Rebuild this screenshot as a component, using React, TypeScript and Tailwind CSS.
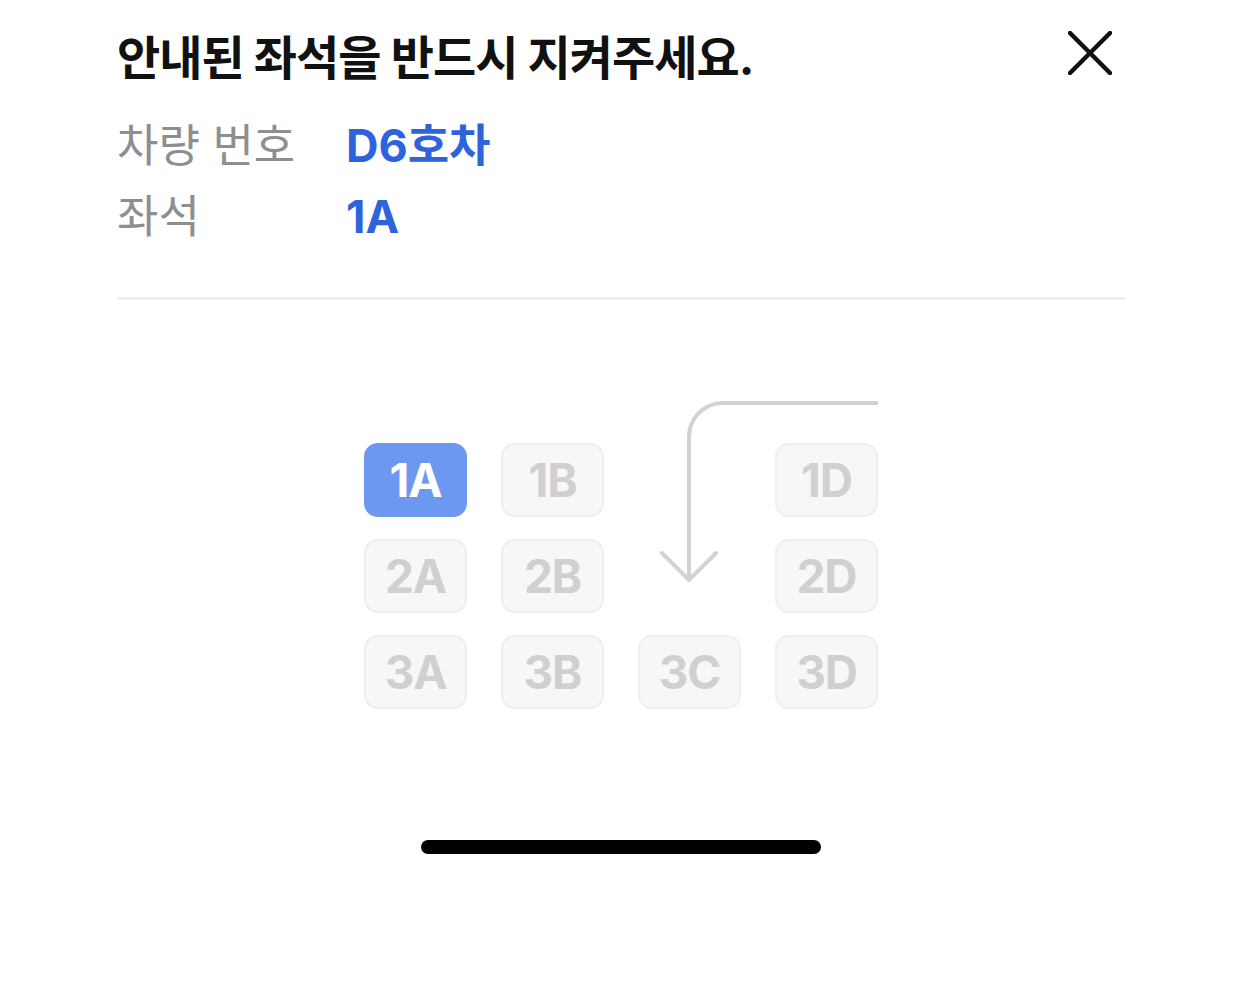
import React from 'react';

const rows = [
    ['1A', '1B', null, '1D'],
    ['2A', '2B', null, '2D'],
    ['3A', '3B', '3C', '3D'],
];

const selected = '1A';

const Seat = ({ label }: { label: string }) => {
    const isSelected = label === selected;
    return (
        <div
            className={
                isSelected
                    ? 'h-[74px] rounded-[14px] bg-[#6d98ef] flex items-center justify-center text-white'
                    : 'h-[74px] rounded-[14px] bg-[#f7f7f7] border-2 border-[#efefef] flex items-center justify-center text-[#d0d0d0]'
            }
        >
            <span className="text-[46px] font-bold tracking-tight">{label}</span>
        </div>
    );
};

export default function App() {
    return (
        <div
            className="w-[1242px] h-[985px] bg-white flex flex-col"
            style={{ fontFamily: 'Inter, "Noto Sans CJK KR", sans-serif' }}
        >
            <div className="px-[117px] pt-[28px]">
                <div className="flex items-center justify-between">
                    <h1 className="text-[47px] font-bold text-[#111] tracking-[-1px] leading-[60px]">
                        안내된 좌석을 반드시 지켜주세요.
                    </h1>
                    <button className="w-[44px] h-[44px] flex items-center justify-center mr-[13px] mt-[-10px]">
                        <svg width="44" height="44" viewBox="0 0 44 44" fill="none" stroke="#111" strokeWidth="4.5" strokeLinecap="round">
                            <path d="M2 2 L42 42 M42 2 L2 42" />
                        </svg>
                    </button>
                </div>

                <div className="mt-[22px] flex flex-col text-[45px] leading-[71px]">
                    <div className="flex">
                        <span className="w-[229px] text-[#8e8e8e]">차량 번호</span>
                        <span className="font-bold text-[#2f63dc]">D6호차</span>
                    </div>
                    <div className="flex">
                        <span className="w-[229px] text-[#8e8e8e]">좌석</span>
                        <span className="font-bold text-[#2f63dc]">1A</span>
                    </div>
                </div>

                <div className="mt-[45px] h-[3px] bg-[#efefef]" />
            </div>

            <div className="flex justify-center mt-[143px]">
                <div className="relative w-[514px] grid grid-cols-4 gap-x-[34px] gap-y-[22px]">
                    <svg
                        className="absolute left-0 top-[-44px]"
                        width="514"
                        height="190"
                        viewBox="0 0 514 190"
                        fill="none"
                        stroke="#d2d2d2"
                        strokeWidth="4"
                        strokeLinecap="round"
                        strokeLinejoin="round"
                    >
                        <path d="M514 4 H359 A34 34 0 0 0 325 38 V181" />
                        <path d="M298 154 L325 181 L352 154" />
                    </svg>
                    {rows.flat().map((label, i) =>
                        label ? <Seat key={i} label={label} /> : <div key={i} />
                    )}
                </div>
            </div>

            <div className="flex justify-center mt-[131px]">
                <div className="w-[400px] h-[14px] rounded-full bg-black" />
            </div>
        </div>
    );
}
